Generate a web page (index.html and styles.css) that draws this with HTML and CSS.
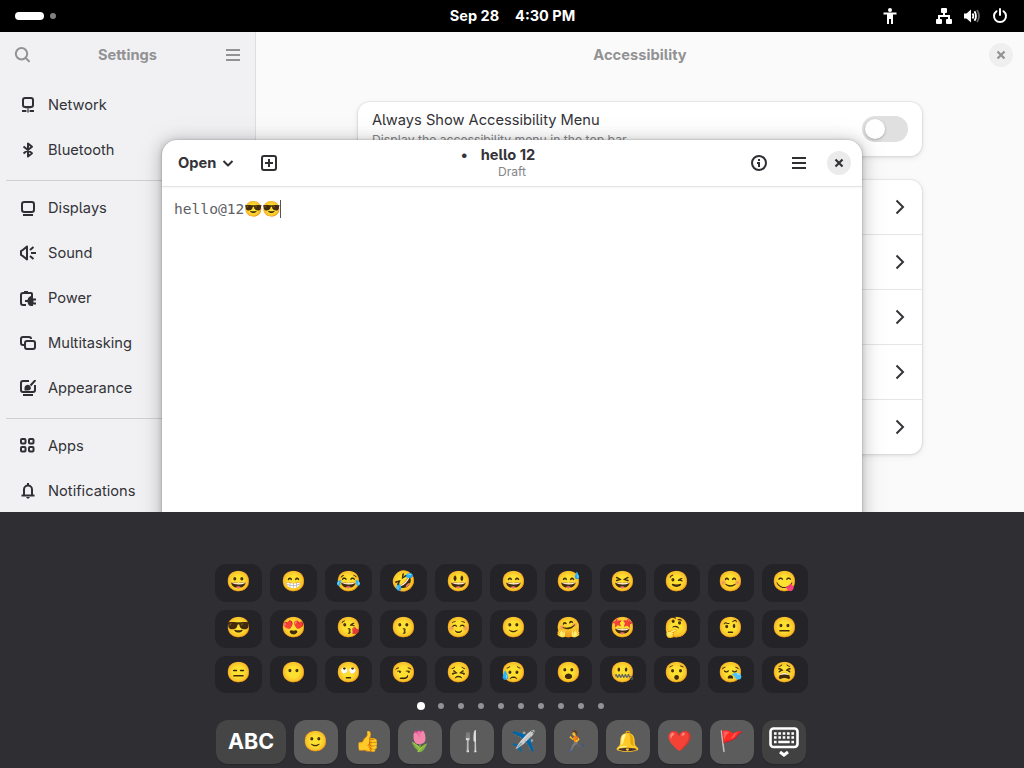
FILE: index.html
```html
<!DOCTYPE html>
<html lang="en">
<head>
<meta charset="utf-8">
<title>hello 12</title>
<link rel="stylesheet" href="styles.css">
</head>
<body>
<header class="topbar">
  <div class="workspaces"><span class="pill"></span><span class="dot"></span></div>
  <div class="clock"><span>Sep 28</span><span>4:30 PM</span></div>
  <div class="status">
    <svg class="a11y" width="16" height="16" viewBox="0 0 16 16" fill="#fff"><circle cx="8" cy="2" r="2"/><path d="M1.500 4.500h13v2H11V16H9v-5H7v5H5V6.500H1.500z"/></svg>
    <svg width="16" height="16" viewBox="0 0 16 16" fill="#fff"><rect x="5" y="0" width="6" height="5" rx="1"/><path d="M7 4h2v3h5v4h-2V9H4v2H2V7h5z"/><rect x="0" y="11" width="6" height="5" rx="1"/><rect x="10" y="11" width="6" height="5" rx="1"/></svg>
    <svg width="16" height="16" viewBox="0 0 16 16" fill="none" stroke="#fff" stroke-width="1.800"><path d="M0 5.500h2.500L7 1.500v13L2.500 10.500H0z" fill="#fff" stroke="none"/><path d="M8.500 5.500Q10.300 8 8.500 10.500M10.500 3.200Q13.500 8 10.500 12.800"/><path d="M13 2Q17 8 13 14" stroke="#666"/></svg>
    <svg width="16" height="16" viewBox="0 0 16 16" fill="none" stroke="#fff" stroke-width="2" stroke-linecap="round"><path d="M4.500 3.200a6 6 0 1 0 7 0M8 1v6"/></svg>
  </div>
</header>

<main class="stage">
  <aside class="sidebar">
    <div class="headbar">
      <svg width="16" height="16" viewBox="0 0 16 16" fill="none" stroke="#929294" stroke-width="2"><circle cx="7.500" cy="6.700" r="5.700"/><path d="M11.500 10.800l4 4"/></svg>
      <span>Settings</span>
      <svg width="16" height="16" viewBox="0 0 16 16" fill="#929294"><path d="M1 2h14v2H1zM1 7h14v2H1zM1 12h14v2H1z"/></svg>
    </div>
    <nav class="nav">
      <div class="item"><svg class="ic" viewBox="0 0 16 16"><rect x="3" y="1" width="10" height="9" rx="2"/><path d="M5 10.300h6M2 14h4M10 14h4"/><path d="M8 11v1.500M6.500 14L8 12.700 9.500 14 8 15.300z" stroke-width="1"/></svg>Network</div>
      <div class="item"><svg class="ic" viewBox="0 0 16 16"><path d="M3.500 4.500l8.500 6.700-4 3.300v-13l4 3.300-8.500 6.700"/></svg>Bluetooth</div>
    </nav>
    <nav class="nav">
      <div class="item"><svg class="ic" viewBox="0 0 16 16"><rect x="2" y="2" width="12" height="10" rx="2.300"/><path d="M3 15h10"/></svg>Displays</div>
      <div class="item"><svg class="ic" viewBox="0 0 16 16"><path d="M1 6v4l2 1.200 4 3.200V1.600L3 4.800zM10 5l3.500-3M11 8h5M10 11l3.500 3"/></svg>Sound</div>
      <div class="item"><svg class="ic" viewBox="0 0 16 16"><path d="M6 15H3a2 2 0 0 1-2-2V5a2 2 0 0 1 2-2h8a1 1 0 0 1 1 1v2M4 2h4"/><path d="M5 10h2.500C8 7.500 9.500 6.300 11 6h2v2.500h3v2h-2.500v2H16v2h-3V16h-2C9.500 16 8 15 7.500 12H5z" fill="#2f2f34" stroke="none"/></svg>Power</div>
      <div class="item"><svg class="ic" viewBox="0 0 16 16"><path d="M4 10H3a2 2 0 0 1-2-2V4a2 2 0 0 1 2-2h6a2 2 0 0 1 2 2"/><rect x="5" y="6" width="10" height="8" rx="2"/></svg>Multitasking</div>
      <div class="item"><svg class="ic" viewBox="0 0 16 16"><path d="M9 1H3a2 2 0 0 0-2 2v7a2 2 0 0 0 2 2h10a2 2 0 0 0 2-2V5M3 15h10M15.500 0l-5 5.500"/><path d="M4.500 10.500V7.500c1-3.500 5-3.500 6.200-.5C11.500 9 10 10.500 8 10.500z" fill="#2f2f34" stroke="none"/></svg>Appearance</div>
    </nav>
    <nav class="nav">
      <div class="item"><svg class="ic" viewBox="0 0 16 16"><rect x="1" y="1" width="4.500" height="4.500" rx="1"/><rect x="9" y="1" width="4.500" height="4.500" rx="1"/><rect x="1" y="9" width="4.500" height="4.500" rx="1"/><rect x="9" y="9" width="4.500" height="4.500" rx="1"/></svg>Apps</div>
      <div class="item"><svg class="ic" viewBox="0 0 16 16"><path d="M1.500 12.500h13M4 12V6.500a4 4 0 0 1 8 0V12M8 0v2.500"/><path d="M6 14h4q-2 3.500-4 0z" fill="#2f2f34" stroke="none"/></svg>Notifications</div>
    </nav>
  </aside>
  <section class="content">
    <div class="content-head"><h1>Accessibility</h1>
      <span class="close faded"><svg width="16" height="16" viewBox="0 0 16 16"><path d="M4.500 4.500l7 7M11.500 4.500l-7 7"/></svg></span>
    </div>
    <div class="card switch-card">
      <div><div class="label">Always Show Accessibility Menu</div><div class="hint">Display the accessibility menu in the top bar</div></div>
      <span class="switch"></span>
    </div>
    <div class="card rows">
      <div class="row"><svg class="chev" viewBox="0 0 16 16"><path d="M4.500 1.500L11 8l-6.500 6.500"/></svg></div>
      <div class="row"><svg class="chev" viewBox="0 0 16 16"><path d="M4.500 1.500L11 8l-6.500 6.500"/></svg></div>
      <div class="row"><svg class="chev" viewBox="0 0 16 16"><path d="M4.500 1.500L11 8l-6.500 6.500"/></svg></div>
      <div class="row"><svg class="chev" viewBox="0 0 16 16"><path d="M4.500 1.500L11 8l-6.500 6.500"/></svg></div>
      <div class="row"><svg class="chev" viewBox="0 0 16 16"><path d="M4.500 1.500L11 8l-6.500 6.500"/></svg></div>
    </div>
  </section>

  <section class="editor">
    <div class="editor-head">
      <div class="side">
        <span class="open">Open</span>
        <svg class="ic down" viewBox="0 0 16 16"><path d="M3.500 6L8 10.500 12.500 6"/></svg>
        <svg class="ic" viewBox="0 0 16 16"><rect x="1" y="1" width="14" height="14" rx="2"/><path d="M8 4v8M4 8h8"/></svg>
      </div>
      <div class="title"><div class="name"><span class="bullet">•</span>hello 12</div><div class="sub">Draft</div></div>
      <div class="side end">
        <svg class="ic" viewBox="0 0 16 16"><circle cx="8" cy="8" r="7"/><path d="M8 4v2M6 8h2v4" /><path d="M8 7v5" stroke-width="2"/></svg>
        <svg class="ic menu" viewBox="0 0 16 16"><path d="M1 3h14M1 8h14M1 13h14"/></svg>
        <span class="close"><svg width="16" height="16" viewBox="0 0 16 16"><path d="M4.500 4.500l7 7M11.500 4.500l-7 7"/></svg></span>
      </div>
    </div>
    <div class="text"><span>hello@12</span><span class="emo">😎</span><span class="emo">😎</span><span class="caret"></span></div>
  </section>
</main>

<footer class="keyboard">
  <div class="keys">
    <span>😀</span><span>😁</span><span>😂</span><span>🤣</span><span>😃</span><span>😄</span><span>😅</span><span>😆</span><span>😉</span><span>😊</span><span>😋</span>
    <span>😎</span><span>😍</span><span>😘</span><span>😗</span><span>☺️</span><span>🙂</span><span>🤗</span><span>🤩</span><span>🤔</span><span>🤨</span><span>😐</span>
    <span>😑</span><span>😶</span><span>🙄</span><span>😏</span><span>😣</span><span>😥</span><span>😮</span><span>🤐</span><span>😯</span><span>😪</span><span>😫</span>
  </div>
  <div class="pages"><i class="on"></i><i></i><i></i><i></i><i></i><i></i><i></i><i></i><i></i><i></i></div>
  <div class="cats">
    <span class="abc">ABC</span><span>🙂</span><span>👍</span><span>🌷</span><span>🍴</span><span>✈️</span><span>🏃</span><span>🔔</span><span>❤️</span><span>🚩</span>
    <span class="hide"><svg width="30" height="30" viewBox="0 0 30 30"><rect x="1.500" y="1.500" width="27" height="18.500" rx="3" fill="none" stroke="#fff" stroke-width="2.600"/><path d="M5 6.500h20M5 10.500h20" stroke="#fff" stroke-width="2.600" stroke-dasharray="2.600 1.750"/><path d="M5 15h2.600M22.400 15H25M9.300 15h11.400" stroke="#fff" stroke-width="2.600"/><path d="M11 25l4 3 4-3" fill="none" stroke="#fff" stroke-width="3"/></svg></span>
  </div>
</footer>
</body>
</html>
```
FILE: styles.css
```css
* { box-sizing: border-box; }
body {
  margin: 0; width: 1024px; height: 768px; overflow: hidden;
  display: flex; flex-direction: column;
  font: 14.67px/20px Inter, "Noto Sans", sans-serif;
  font-feature-settings: "cv05" 1;
  color: #333338;
}
svg { display: block; flex: none; }

.topbar {
  height: 32px; flex: none; background: #000; color: #fff;
  display: grid; grid-template-columns: 1fr auto 1fr; align-items: center;
  font-weight: 700; font-size: 14.500px;
}
.workspaces { display: flex; align-items: center; gap: 6px; padding-left: 15px; }
.pill { width: 29px; height: 8px; border-radius: 4px; background: #fff; }
.dot { width: 6px; height: 6px; border-radius: 50%; background: #808080; }
.clock { display: flex; gap: 16px; padding-left: 1px; }
.status { display: flex; justify-content: flex-end; gap: 12px; padding-right: 16px; }
.a11y { margin-right: 26px; }

.stage { height: 480px; flex: none; position: relative; display: flex; overflow: hidden; background: #fafafa; }
.sidebar { width: 256px; background: #f1f1f3; border-right: 1px solid #dedee0; }
.headbar {
  height: 46px; padding: 0 14px; display: flex; align-items: center; justify-content: space-between;
  color: #929294; font-weight: 700;
}
.nav { padding-bottom: 8px; }
.headbar + .nav { padding-top: 4px; }
.nav + .nav::before { content: ""; display: block; height: 1px; margin: 0 6px 4px; background: #d0d0d2; }
.item { height: 45px; padding-left: 20px; display: flex; align-items: center; gap: 12px; }
.ic { width: 16px; height: 16px; fill: none; stroke: #2f2f34; stroke-width: 2; stroke-linejoin: round; }

.content { flex: 1; display: flex; flex-direction: column; align-items: center; }
.content-head { height: 46px; width: 100%; display: grid; grid-template-columns: 1fr auto 1fr; align-items: center; padding: 0 11px; }
.content-head h1 { margin: 0; grid-column: 2; font-size: 14.700px; line-height: 20px; color: #929294; }
.content-head .close { justify-self: end; }
.close { width: 24px; height: 24px; border-radius: 50%; background: #ebebeb; display: grid; place-items: center; }
.close path { stroke: #333338; stroke-width: 2.200; }
.close.faded { background: #efefef; }
.close.faded path { stroke: #929294; }
.card { width: 564px; background: #fff; border-radius: 12px; box-shadow: 0 0 0 1px #0000000a, 0 1px 3px 1px #00000012, 0 2px 6px 2px #00000008; }
.switch-card { height: 54px; margin-top: 24px; padding: 0 14px; display: flex; justify-content: space-between; align-items: center; }
.label { line-height: 20px; padding-top: 1px; }
.hint { font-size: 12.200px; line-height: 19px; color: #858588; }
.switch { width: 46px; height: 26px; border-radius: 13px; background: #e0e0e1; padding: 3px; }
.switch::before { content: ""; display: block; width: 20px; height: 20px; border-radius: 50%; background: #fff; box-shadow: 0 1px 3px #00000040; }
.rows { margin-top: 24px; }
.row { height: 55px; display: flex; justify-content: flex-end; align-items: center; padding-right: 14px; border-bottom: 1px solid #e6e6e7; }
.row:last-child { height: 54px; border: 0; }
.chev { width: 16px; height: 16px; fill: none; stroke: #333338; stroke-width: 2; }

.editor {
  position: absolute; left: 162px; top: 108px; width: 700px; height: 420px;
  background: #fff; border-radius: 15px 15px 0 0;
  box-shadow: 0 0 0 1px #0000000d, 0 1px 5px 1px #00000026, 0 2px 14px 5px #0000001c, 0 3px 28px 5px #00000010;
}
.editor-head {
  height: 47px; border-bottom: 1px solid #e3e3e3; box-shadow: 0 1px 3px #0000000a;
  display: grid; grid-template-columns: 1fr auto 1fr; align-items: center; padding: 0 11px 0 16px;
}
.side { display: flex; align-items: center; }
.open { font-weight: 700; }
.down { margin: 0 25px 0 4px; }
.end { justify-content: flex-end; }
.menu { margin: 0 20px 0 24px; }
.title { text-align: center; margin-left: -5px; }
.name { font-weight: 700; line-height: 17px; margin: 0 8px 0 -20px; }
.bullet { margin-right: 13px; }
.sub { font-size: 12.100px; line-height: 16px; color: #858588; margin-left: 8px; margin-right: 8px; }
.text { height: 44px; padding-left: 12px; display: flex; align-items: center; font: 14.600px/20px "DejaVu Sans Mono", monospace; color: #606065; }
.emo { width: 18px; font: 15px/20px "Noto Color Emoji", sans-serif; text-indent: 0.500px; }
.caret { width: 1px; height: 18px; background: #555; }

.keyboard { height: 256px; flex: none; background: #2f2e33; display: flex; flex-direction: column; align-items: center; padding-top: 52px; font-family: "Noto Color Emoji", Inter, sans-serif; }
.keys {
  width: 594px; display: grid; gap: 8px;
  grid-template-columns: repeat(7, 47px) repeat(4, 46px); grid-template-rows: 38px 38px 37px;
}
.keys span { border-radius: 11px; background: #242428; display: grid; place-items: center; font-size: 20px; line-height: 24px; padding-bottom: 4px; }
.keys span:nth-child(n+23) { padding-bottom: 5px; }
.pages { height: 27px; display: flex; align-items: center; gap: 14px; padding: 0 3px 2px 0; }
.pages i { width: 6px; height: 6px; border-radius: 50%; background: #929295; }
.pages .on { width: 8px; height: 8px; background: #fff; margin-right: -1px; }
.cats { display: flex; gap: 8px; margin-right: 2px; }
.cats > span { width: 44px; height: 44px; border-radius: 12px; background: #5c5c5c; box-shadow: 0 1px 1px #0003; display: grid; place-items: center; font-size: 20px; line-height: 24px; padding-bottom: 2px; }
.cats > .abc { width: 70px; background: #454545; color: #fff; font: 700 21.500px/26px Inter, sans-serif; }
.cats > .hide { background: #414141; padding-right: 1px; padding-bottom: 0; }
```
